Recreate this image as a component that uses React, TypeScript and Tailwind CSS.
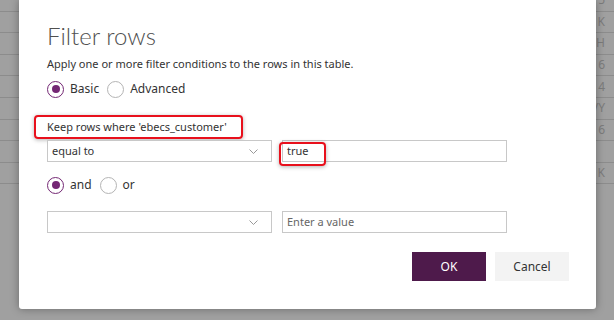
const rowLetters = ["15", "K", "H", "6", "4", "VY", "6", "", "K"];

const Radio = ({ checked, label }: { checked?: boolean; label: string }) => (
  <label className="flex items-center gap-[6px]">
    <span
      className={
        checked
          ? "flex h-[17px] w-[17px] items-center justify-center rounded-full border border-[#742774]"
          : "flex h-[17px] w-[17px] items-center justify-center rounded-full border border-[#b4b4b4]"
      }
    >
      {checked && <span className="h-[8px] w-[8px] rounded-full bg-[#742774]" />}
    </span>
    <span className="text-[12px] text-[#333]">{label}</span>
  </label>
);

const Chevron = () => (
  <svg width="9" height="5" viewBox="0 0 9 5" className="text-[#999]">
    <path d="M0.5 0.5 L4.5 4.5 L8.5 0.5" fill="none" stroke="currentColor" strokeWidth="1" />
  </svg>
);

const Select = ({ value }: { value?: string }) => (
  <div className="flex h-[22px] w-[225px] items-center justify-between border border-[#c8c8c8] bg-white pl-[4px] pr-[13px] text-[11px] text-[#333]">
    <span>{value}</span>
    <Chevron />
  </div>
);

export default function App() {
  return (
    <div
      className="relative h-[320px] w-[614px] overflow-hidden bg-[#a0a0a0]"
      style={{ fontFamily: '"Segoe UI", "Noto Sans", sans-serif' }}
    >
      {/* table behind the modal */}
      <div className="-mt-[10px]">
        {rowLetters.map((l, i) => (
          <div
            key={i}
            className="flex h-[21.6px] items-center justify-end border-b border-[#8c8c8c] pr-[9px] text-[12px] text-[#7c7c7c]"
          >
            {l}
          </div>
        ))}
      </div>

      {/* dialog */}
      <div className="absolute left-[19px] top-0 h-[309px] w-[577px] rounded-b-[3px] bg-white pl-[28px] pr-[27px] pt-[20px] shadow-[0_0_8px_rgba(0,0,0,0.35)]">
        <h1
          className="text-[24px] font-light leading-[32px] text-[#505050]"
          style={{ fontFamily: '"Segoe UI Light", Lato, sans-serif' }}
        >
          Filter rows
        </h1>
        <p className="mt-[4px] text-[11px] leading-[16px] text-[#333]">
          Apply one or more filter conditions to the rows in this table.
        </p>
        <div className="mt-[8px] flex items-center gap-[8px]">
          <Radio checked label="Basic" />
          <Radio label="Advanced" />
        </div>

        <div className="-ml-[13px] mt-[17px] inline-flex h-[24px] items-center rounded-[4px] border-2 border-[#e8101c] pl-[11px] pr-[14px] text-[11px] text-[#333] shadow-[0_1px_4px_rgba(0,0,0,0.3)]">
          Keep rows where 'ebecs_customer'
        </div>

        <div className="mt-[1px] flex gap-[10px]">
          <Select value="equal to" />
          <div className="relative flex h-[22px] w-[225px] items-center border border-[#c8c8c8] pl-[4px] text-[11px] text-[#333]">
            true
            <div className="absolute -left-[4px] top-[1px] h-[24px] w-[47px] rounded-[4px] border-2 border-[#e8101c] shadow-[0_1px_4px_rgba(0,0,0,0.3)]" />
          </div>
        </div>

        <div className="mt-[14px] flex items-center gap-[8px]">
          <Radio checked label="and" />
          <Radio label="or" />
        </div>

        <div className="mt-[17px] flex gap-[10px]">
          <Select />
          <div className="flex h-[22px] w-[225px] items-center border border-[#c8c8c8] pl-[4px] text-[11px] text-[#666]">
            Enter a value
          </div>
        </div>

        <div className="mt-[19px] flex justify-end gap-[9px]">
          <button className="h-[29px] w-[74px] bg-[#4e1a4b] text-[12px] text-white">OK</button>
          <button className="h-[29px] w-[74px] bg-[#f3f3f3] text-[12px] text-[#333]">Cancel</button>
        </div>
      </div>
    </div>
  );
}
